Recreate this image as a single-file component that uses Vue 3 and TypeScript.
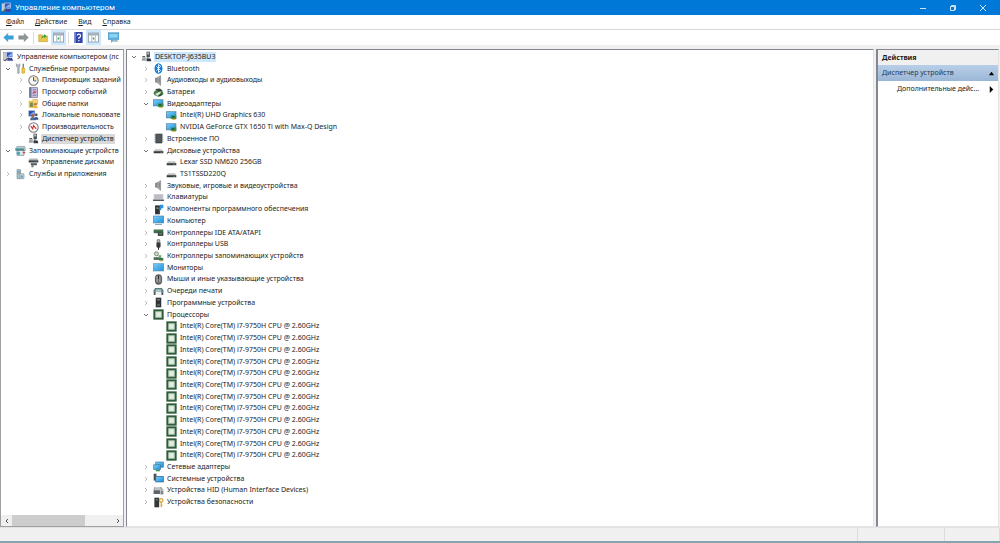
<script setup lang="ts">
import { ref } from 'vue'

interface TreeNode {
  label: string
  icon: string
  level: number
  state?: 'open' | 'closed'
  selected?: boolean
}

const node = (level: number, icon: string, label: string, state?: 'open' | 'closed', selected = false): TreeNode => ({
  level,
  icon,
  label,
  state,
  selected,
})

const menus = [
  { key: 'Ф', rest: 'айл' },
  { key: 'Д', rest: 'ействие' },
  { key: 'В', rest: 'ид' },
  { key: 'С', rest: 'правка' },
]

const consoleTree = ref<TreeNode[]>([
  node(0, 'manage', 'Управление компьютером (лс'),
  node(1, 'tools', 'Служебные программы', 'open'),
  node(2, 'clock', 'Планировщик заданий', 'closed'),
  node(2, 'events', 'Просмотр событий', 'closed'),
  node(2, 'folders', 'Общие папки', 'closed'),
  node(2, 'users', 'Локальные пользовате', 'closed'),
  node(2, 'perf', 'Производительность', 'closed'),
  node(2, 'device', 'Диспетчер устройств', undefined, true),
  node(1, 'storage', 'Запоминающие устройств', 'open'),
  node(2, 'disks', 'Управление дисками'),
  node(1, 'services', 'Службы и приложения', 'closed'),
])

const cpus = Array.from({ length: 12 }, () => node(2, 'cpu', 'Intel(R) Core(TM) i7-9750H CPU @ 2.60GHz'))

const deviceTree = ref<TreeNode[]>([
  node(0, 'device', 'DESKTOP-J635BU3', 'open', true),
  node(1, 'bluetooth', 'Bluetooth', 'closed'),
  node(1, 'speaker', 'Аудиовходы и аудиовыходы', 'closed'),
  node(1, 'battery', 'Батареи', 'closed'),
  node(1, 'video', 'Видеоадаптеры', 'open'),
  node(2, 'video', 'Intel(R) UHD Graphics 630'),
  node(2, 'video', 'NVIDIA GeForce GTX 1650 Ti with Max-Q Design'),
  node(1, 'firmware', 'Встроенное ПО', 'closed'),
  node(1, 'drive', 'Дисковые устройства', 'open'),
  node(2, 'drive', 'Lexar SSD NM620 256GB'),
  node(2, 'drive', 'TS1TSSD220Q'),
  node(1, 'speaker', 'Звуковые, игровые и видеоустройства', 'closed'),
  node(1, 'keyboard', 'Клавиатуры', 'closed'),
  node(1, 'component', 'Компоненты программного обеспечения', 'closed'),
  node(1, 'computer', 'Компьютер', 'closed'),
  node(1, 'ide', 'Контроллеры IDE ATA/ATAPI', 'closed'),
  node(1, 'usb', 'Контроллеры USB', 'closed'),
  node(1, 'raid', 'Контроллеры запоминающих устройств', 'closed'),
  node(1, 'monitor', 'Мониторы', 'closed'),
  node(1, 'mouse', 'Мыши и иные указывающие устройства', 'closed'),
  node(1, 'printer', 'Очереди печати', 'closed'),
  node(1, 'software', 'Программные устройства', 'closed'),
  node(1, 'cpu', 'Процессоры', 'open'),
  ...cpus,
  node(1, 'network', 'Сетевые адаптеры', 'closed'),
  node(1, 'system', 'Системные устройства', 'closed'),
  node(1, 'hid', 'Устройства HID (Human Interface Devices)', 'closed'),
  node(1, 'security', 'Устройства безопасности', 'closed'),
])

const select = (list: TreeNode[], item: TreeNode) => {
  list.forEach((n) => (n.selected = n === item))
}
</script>

<template>
  <svg class="defs" aria-hidden="true">
    <defs>
      <linearGradient id="screen" x1="0" y1="0" x2="1" y2="1">
        <stop offset="0" stop-color="#7fd0f8" />
        <stop offset="1" stop-color="#1b8fdc" />
      </linearGradient>
      <symbol id="manage" viewBox="0 0 16 16">
        <rect x="1" y="2" width="4" height="12" fill="#c4ccd2" stroke="#7c8790" stroke-width=".7" />
        <rect x="5" y="1.500" width="9" height="7.500" fill="#3557c4" stroke="#c8d3e0" />
        <path d="M6 8l7-5v5z" fill="#8db5f4" />
        <path d="M7 10h6l2 4H6z" fill="#38459a" />
        <path d="M1 14l7-5 1 1-6 5z" fill="#50555c" />
      </symbol>
      <symbol id="tools" viewBox="0 0 16 16">
        <path d="M4 15V7L2 5V1l2 2h1l2-2v4L6 7v8z" fill="#b3bac2" stroke="#6d7780" stroke-width=".7" />
        <path d="M11 1h2v7h-2z" fill="#777f86" />
        <rect x="10" y="7" width="4" height="8" rx="1" fill="#f1c937" stroke="#b58b18" stroke-width=".7" />
      </symbol>
      <symbol id="clock" viewBox="0 0 16 16">
        <circle cx="8" cy="8" r="6.800" fill="#f4f7fb" stroke="#7d7360" stroke-width="1.500" />
        <path d="M8 8h5A5 5 0 0 0 8 3z" fill="#f2d9a4" />
        <path d="M8 3v5.500h4" fill="none" stroke="#34475f" stroke-width="1.200" />
      </symbol>
      <symbol id="events" viewBox="0 0 16 16">
        <rect x="2" y="1" width="12" height="14" fill="#c9bfe0" stroke="#72698c" />
        <path d="M2 1h3v14H2z" fill="#6a7b9c" />
        <path d="M7 4h5M7 12h5" stroke="#5161a8" />
        <path d="M7 10l2-4 1 3 2-3" fill="none" stroke="#c4475a" stroke-width="1.400" />
      </symbol>
      <symbol id="folders" viewBox="0 0 16 16">
        <path d="M1 4h5l1 1h4v9H1z" fill="#eebc45" />
        <path d="M7 2h7v7H7z" fill="#f4d77b" stroke="#cf9d2c" stroke-width=".7" />
        <path d="M3 7h4v6H3z" fill="#6b8e5a" />
        <circle cx="11" cy="9" r="2" fill="#c87841" />
        <path d="M8 15q0-4 3-4t3 4z" fill="#f2b73a" />
      </symbol>
      <symbol id="users" viewBox="0 0 16 16">
        <rect x="1" y="1" width="9" height="8" fill="#294cb8" stroke="#acb9ca" />
        <path d="M2 7l7-5v5z" fill="#84aef2" />
        <circle cx="7" cy="8" r="2.200" fill="#a2623b" />
        <path d="M3 15q0-5 4-5t4 5z" fill="#536d92" />
        <circle cx="12" cy="7" r="2" fill="#654c3c" />
        <path d="M9 14q0-4 3-4t3 4z" fill="#31548a" />
      </symbol>
      <symbol id="perf" viewBox="0 0 16 16">
        <circle cx="8" cy="8" r="6.800" fill="#fff" stroke="#7c7272" stroke-width="1.500" />
        <path d="M4 6l3 4 1-5 4 5" fill="none" stroke="#d32e2e" stroke-width="1.600" />
      </symbol>
      <symbol id="device" viewBox="0 0 16 16">
        <path d="M8 1h5v8H8z" fill="#4b5056" />
        <path d="M9 2h3v3H9z" fill="#b8c0c8" />
        <path d="M2 9h5v5H1z" fill="#9aa2aa" />
        <path d="M2 8h4M10 9v3" stroke="#555b61" stroke-width="1.500" />
        <path d="M8 11h6l1 4H8z" fill="#34383d" />
      </symbol>
      <symbol id="storage" viewBox="0 0 16 16">
        <path d="M1 5l2-3h11l1 3v3H1z" fill="#bac7ce" stroke="#66777f" stroke-width=".7" />
        <rect x="1" y="5" width="12" height="3" fill="#3d9494" />
        <path d="M3 8h10v7H3z" fill="#e6edf0" stroke="#63767f" />
        <circle cx="5" cy="12" r="2.500" fill="#43a8bc" />
        <path d="M11 10h4v2h-4z" fill="#bf5353" />
      </symbol>
      <symbol id="disks" viewBox="0 0 16 16">
        <path d="M2 2h12l1 4H1z" fill="#aeb5ba" />
        <path d="M1 5h14v3H1z" fill="#3c4247" />
        <path d="M4 9h9v3H4z" fill="#555b60" />
        <path d="M5 12h3v3H5zM11 6h2v1h-2z" fill="#6a7176" />
      </symbol>
      <symbol id="services" viewBox="0 0 16 16">
        <path d="M3 1h5v13H3z" fill="#a9c6d2" stroke="#6c8793" />
        <path d="M4 4h3M4 6h3" stroke="#557382" />
        <path d="M7 7h6v7H7z" fill="#d4dde1" stroke="#7f929b" />
        <circle cx="10" cy="11" r="2" fill="#71a4bc" />
      </symbol>
      <symbol id="bluetooth" viewBox="0 0 16 16">
        <ellipse cx="8" cy="8" rx="5.800" ry="7.700" fill="#0c7ee0" />
        <path d="M5 5l6 6-3 3V2l3 3-6 6" fill="none" stroke="#fff" stroke-width="1.300" />
      </symbol>
      <symbol id="speaker" viewBox="0 0 16 16">
        <path d="M3 4h3v7H3z" fill="#8a8e92" />
        <path d="M6 4l5-3v14l-5-4z" fill="#b4b7ba" stroke="#606468" stroke-width=".8" />
        <path d="M9 4v7" stroke="#6b6f73" stroke-width="1.400" />
      </symbol>
      <symbol id="battery" viewBox="0 0 16 16">
        <ellipse cx="8" cy="9" rx="7" ry="5" fill="#4c7c4c" />
        <path d="M3 3l7-1 4 3-6 2z" fill="#34453a" />
        <path d="M3 10l8-4v3l-5 4z" fill="#d9e6d9" />
        <path d="M9 13l4-3" stroke="#233b27" stroke-width="1.500" />
      </symbol>
      <symbol id="video" viewBox="0 0 16 16">
        <rect x=".5" y="2.500" width="14" height="9" fill="url(#screen)" stroke="#527e98" />
        <path d="M7 8h8v5H7z" fill="#3b8b4b" />
        <path d="M9 9h3v2H9z" fill="#1e4e2c" />
        <path d="M9 13h5v1.500H9z" fill="#e0b93b" />
      </symbol>
      <symbol id="firmware" viewBox="0 0 16 16">
        <rect x="3.500" y="1" width="10" height="14" fill="#3f4245" />
        <path d="M2 3h13M2 6h13M2 9h13M2 12h13" stroke="#6c7074" />
        <path d="M6 3h5v10H6z" fill="#55595c" />
      </symbol>
      <symbol id="drive" viewBox="0 0 16 16">
        <path d="M3 6h10l2 3H1z" fill="#c2c5c8" />
        <path d="M1 9h14v3H1z" fill="#36393c" />
        <path d="M11 10h2v1h-2z" fill="#8fd18f" />
      </symbol>
      <symbol id="keyboard" viewBox="0 0 16 16">
        <path d="M1 3h14v8H1z" fill="#c9ccd0" />
        <path d="M2 5h12M2 7h12M2 9h12" stroke="#a2a6ad" stroke-width=".7" />
        <path d="M0 11h16v2H0z" fill="#4a4d55" />
      </symbol>
      <symbol id="component" viewBox="0 0 16 16">
        <path d="M3 2h7v13H3z" fill="#2f3438" />
        <path d="M5 5h3v2H5z" fill="#79b77c" />
        <path d="M10 1h5v5h-5zM9 6h3v3H9z" fill="#2f8ee0" />
      </symbol>
      <symbol id="computer" viewBox="0 0 16 16">
        <rect x=".5" y="1.500" width="15" height="10" fill="url(#screen)" stroke="#4f86a8" />
        <path d="M3 13h10v1.500H3z" fill="#8aa6b8" />
      </symbol>
      <symbol id="ide" viewBox="0 0 16 16">
        <path d="M1 4h14v5H1z" fill="#3c6b4a" />
        <path d="M1 3h14v1.500H1z" fill="#a3b3a7" />
        <path d="M7 8h8v5H7z" fill="#394744" />
        <path d="M9 10h4" stroke="#9cbfa5" />
      </symbol>
      <symbol id="usb" viewBox="0 0 16 16">
        <path d="M6 1h4v4H6z" fill="#b0b3b5" stroke="#505356" stroke-width=".8" />
        <path d="M5 5h6v6l-2 2H7l-2-2z" fill="#35383a" />
        <path d="M8 13v3" stroke="#35383a" stroke-width="1.500" />
      </symbol>
      <symbol id="raid" viewBox="0 0 16 16">
        <circle cx="5" cy="4" r="3" fill="#c9d6cb" stroke="#57705d" />
        <path d="M1 9h9v4H1z" fill="#4e6b56" />
        <path d="M8 6h4v4H8z" fill="#7aa083" />
        <path d="M9 10h6v4H9z" fill="#36774b" />
        <path d="M10 14h4v1h-4z" fill="#e0b93b" />
      </symbol>
      <symbol id="monitor" viewBox="0 0 16 16">
        <rect x=".5" y="2.500" width="15" height="10.500" fill="url(#screen)" stroke="#4f90bd" />
      </symbol>
      <symbol id="mouse" viewBox="0 0 16 16">
        <rect x="3.500" y="1" width="9" height="14" rx="4" fill="#6a6e72" stroke="#35383b" />
        <path d="M6 3v9M10 3v9" stroke="#d3d6d8" />
        <path d="M8 3v4" stroke="#232628" stroke-width="1.500" />
      </symbol>
      <symbol id="printer" viewBox="0 0 16 16">
        <path d="M3 3h10l3 5H0z" fill="#557b7c" />
        <path d="M4 5h8v2H4z" fill="#c8dada" />
        <path d="M1 8h3v5H1zM12 8h3v5h-3z" fill="#4b6063" />
        <path d="M4 9h8v4H4z" fill="#f1f4f4" />
      </symbol>
      <symbol id="software" viewBox="0 0 16 16">
        <path d="M4 1h8v14H4z" fill="#2f3336" />
        <path d="M6 3h4v2H6z" fill="#808589" />
        <path d="M6 10h4v3H6z" fill="#526a58" />
      </symbol>
      <symbol id="cpu" viewBox="0 0 16 16">
        <rect x="2" y="2" width="12" height="12" fill="#dfe9df" stroke="#2f5d3c" stroke-width="3" />
        <rect x="4" y="4" width="8" height="8" fill="#e4ebe4" stroke="#87ad8c" />
      </symbol>
      <symbol id="network" viewBox="0 0 16 16">
        <rect x="4" y="1.500" width="11" height="7.500" fill="url(#screen)" stroke="#3c789b" />
        <rect x="1" y="5.500" width="10" height="7" fill="url(#screen)" stroke="#3c789b" />
        <path d="M4 13h6v2H4z" fill="#3f9b58" />
      </symbol>
      <symbol id="system" viewBox="0 0 16 16">
        <path d="M1 1h4v10H1z" fill="#484d52" />
        <rect x="4" y="5" width="11" height="8" fill="url(#screen)" stroke="#2a6188" />
      </symbol>
      <symbol id="hid" viewBox="0 0 16 16">
        <path d="M2 3h10l3 4v6H1V6z" fill="#a0a5a8" />
        <path d="M1 8h9v5H1z" fill="#5b6265" />
        <path d="M3 4h7M3 6h9" stroke="#edf0f1" />
        <path d="M11 8h4v6h-4z" fill="#7b8185" stroke="#e9ebec" stroke-width=".7" />
      </symbol>
      <symbol id="security" viewBox="0 0 16 16">
        <path d="M2 1h7v14H2z" fill="#333739" />
        <path d="M4 3h3v2H4z" fill="#73787b" />
        <circle cx="12" cy="5" r="2.500" fill="none" stroke="#d9a534" stroke-width="1.800" />
        <path d="M12 7v8M12 12h2" stroke="#d9a534" stroke-width="1.800" />
      </symbol>
      <symbol id="arrow-left" viewBox="0 0 16 16">
        <path d="M1 8l6-6v3.500h8v5H7V14z" fill="#35a5e0" stroke="#4d88ab" stroke-width=".6" />
      </symbol>
      <symbol id="arrow-right" viewBox="0 0 16 16">
        <path d="M15 8L9 2v3.500H1v5h8V14z" fill="#8f9498" stroke="#73787c" stroke-width=".6" />
      </symbol>
      <symbol id="upfolder" viewBox="0 0 16 16">
        <path d="M1 4h5l1 2h7v8H1z" fill="#eac64f" stroke="#bd9d36" stroke-width=".8" />
        <path d="M5 10c0-4 2-5 4-5V3l4 3-4 3V7c-1 0-2 1-4 3z" fill="#3fa33f" />
      </symbol>
      <symbol id="panel" viewBox="0 0 16 16">
        <rect x=".5" y="1.500" width="15" height="13" fill="#fff" stroke="#7b8792" />
        <path d="M1 2h14v3H1z" fill="#9fabb6" />
        <path d="M5.500 5v9M10.500 5v9" stroke="#8d98a2" />
        <path d="M7 8h2v3H7z" fill="#3ba340" />
      </symbol>
      <symbol id="help" viewBox="0 0 16 16">
        <rect x="2" y="0" width="12" height="16" fill="#2f45ab" />
        <path d="M2 0h2v16H2z" fill="#8792d2" />
        <path d="M6 5q0-2 2.500-2T11 5.500 8.500 8.500V10M8.500 11.500v2" fill="none" stroke="#fff" stroke-width="1.700" />
      </symbol>
      <symbol id="display" viewBox="0 0 16 16">
        <path d="M0 1h16v10H9l-4 4v-4H0z" fill="#58b3e2" stroke="#4685a6" stroke-width=".8" />
        <path d="M2 3h12v5H2z" fill="#8fd3f2" />
        <path d="M8 12h6v2H8z" fill="#8aa1ad" />
      </symbol>
    </defs>
  </svg>

  <div class="window">
    <header class="titlebar">
      <svg class="icon"><use href="#manage" /></svg>
      <h1>Управление компьютером</h1>
      <button type="button" aria-label="Свернуть">
        <svg viewBox="0 0 8 8"><path d="M1 4.500h6" /></svg>
      </button>
      <button type="button" aria-label="Свернуть в окно">
        <svg viewBox="0 0 8 8"><path d="M1.500 2.500h4v4h-4zM2.500 2.500v-1h4v4h-1" /></svg>
      </button>
      <button type="button" aria-label="Закрыть">
        <svg viewBox="0 0 8 8"><path d="M1 1l6 6M7 1L1 7" /></svg>
      </button>
    </header>

    <nav class="menubar">
      <button v-for="m in menus" :key="m.key" type="button"><u>{{ m.key }}</u>{{ m.rest }}</button>
    </nav>

    <div class="toolbar" role="toolbar">
      <button type="button" aria-label="Назад"><svg><use href="#arrow-left" /></svg></button>
      <button type="button" aria-label="Вперед"><svg><use href="#arrow-right" /></svg></button>
      <i class="divider"></i>
      <button type="button" aria-label="Вверх"><svg><use href="#upfolder" /></svg></button>
      <button type="button" class="on" aria-label="Дерево консоли"><svg><use href="#panel" /></svg></button>
      <i class="divider"></i>
      <button type="button" aria-label="Справка"><svg><use href="#help" /></svg></button>
      <button type="button" class="on" aria-label="Панель действий"><svg><use href="#panel" /></svg></button>
      <i class="gap"></i>
      <button type="button" aria-label="Обновить"><svg><use href="#display" /></svg></button>
    </div>

    <main class="panes">
      <section class="pane console">
        <ul class="tree" role="tree">
          <li
            v-for="(n, i) in consoleTree"
            :key="i"
            role="treeitem"
            :class="['row', 'level' + n.level, { selected: n.selected }]"
            @click="select(consoleTree, n)"
          >
            <button v-if="n.state" type="button" :class="['toggle', n.state]" :aria-label="n.label">
              <svg viewBox="0 0 8 8"><path d="M3 2l2 2-2 2" /></svg>
            </button>
            <i v-else-if="n.level" class="toggle"></i>
            <svg class="icon"><use :href="'#' + n.icon" /></svg>
            <span class="label">{{ n.label }}</span>
          </li>
        </ul>
        <div class="scrollbar">
          <button type="button" aria-label="Влево"><svg viewBox="0 0 8 8"><path d="M5 2L3 4l2 2" /></svg></button>
          <div class="track"><div class="thumb"></div></div>
          <button type="button" aria-label="Вправо"><svg viewBox="0 0 8 8"><path d="M3 2l2 2-2 2" /></svg></button>
        </div>
      </section>

      <section class="pane devices">
        <ul class="tree" role="tree">
          <li
            v-for="(n, i) in deviceTree"
            :key="i"
            role="treeitem"
            :class="['row', 'level' + n.level, { selected: n.selected }]"
            @click="select(deviceTree, n)"
          >
            <button v-if="n.state" type="button" :class="['toggle', n.state]" :aria-label="n.label">
              <svg viewBox="0 0 8 8"><path d="M3 2l2 2-2 2" /></svg>
            </button>
            <i v-else class="toggle"></i>
            <svg class="icon"><use :href="'#' + n.icon" /></svg>
            <span class="label">{{ n.label }}</span>
          </li>
        </ul>
      </section>

      <aside class="pane actions">
        <h2>Действия</h2>
        <button type="button" class="group">
          <span>Диспетчер устройств</span>
          <svg viewBox="0 0 8 8"><path d="M1 6l3-4 3 4z" /></svg>
        </button>
        <button type="button" class="more">
          <span>Дополнительные дейс...</span>
          <svg viewBox="0 0 8 8"><path d="M2 0l4 4-4 4z" /></svg>
        </button>
      </aside>
    </main>

    <footer class="status"><span></span><span></span><span></span></footer>
  </div>
</template>

<style>
html,
body,
#app {
  height: 100%;
  margin: 0;
}
</style>

<style scoped>
.defs {
  position: absolute;
  width: 0;
  height: 0;
}
.window {
  box-sizing: border-box;
  height: 100vh;
  display: flex;
  flex-direction: column;
  overflow: hidden;
  background: #f0f0f0;
  border-bottom: 2px solid #84a5ae;
  font-family: 'Noto Sans', 'Open Sans', sans-serif;
  font-size: 7px;
  line-height: 10px;
  color: #1c1c1c;
}
button {
  display: flex;
  align-items: center;
  justify-content: center;
  padding: 0;
  border: 0;
  background: none;
  font: inherit;
  color: inherit;
}
svg {
  display: block;
  flex: none;
}
.icon {
  width: 11px;
  height: 11px;
}
.titlebar {
  height: 15px;
  display: flex;
  align-items: center;
  padding: 0 2px 0 1px;
  background: #0078d7;
  color: #fff;
}
.titlebar h1 {
  flex: 1;
  margin: 0 0 0 3px;
  font-family: Roboto, 'Noto Sans', sans-serif;
  font-size: 8px;
  font-weight: 400;
}
.titlebar button {
  width: 30px;
  height: 15px;
}
.titlebar button svg {
  width: 8px;
  height: 8px;
  fill: none;
  stroke: #fff;
  stroke-width: 0.8;
}
.menubar {
  height: 14px;
  display: flex;
  align-items: center;
  gap: 11px;
  padding-left: 6px;
  background: #fff;
  border-bottom: 1px solid #d8d8d8;
}
.toolbar {
  height: 15px;
  display: flex;
  align-items: center;
  padding-left: 1px;
  background: #fff;
}
.toolbar button {
  width: 15px;
  height: 15px;
}
.toolbar button svg {
  width: 11px;
  height: 11px;
}
.toolbar button.on {
  background: #cce8ff;
}
.divider {
  width: 1px;
  height: 12px;
  margin: 0 2px;
  background: #dcdcdc;
}
.gap {
  width: 5px;
}
.panes {
  flex: 1;
  min-height: 0;
  display: grid;
  grid-template-columns: 124px 1fr 123px;
  gap: 2px;
  padding: 4px 1px 0 0;
}
.pane {
  min-width: 0;
  display: flex;
  flex-direction: column;
  overflow: hidden;
  background: #fff;
  border: 1px solid #a0a0a0;
  border-top-color: #828790;
}
.devices {
  border-color: #828790 #e3e3e3 #e3e3e3 #828790;
}
.actions {
  border-color: #828790 #e3e3e3 #e3e3e3 #828790;
  border-left-width: 2px;
}
.tree {
  flex: 1;
  min-height: 0;
  display: grid;
  grid-template-rows: repeat(39, 1fr);
  margin: 0;
  padding: 1px 0 18px 2px;
  list-style: none;
}
.console .tree {
  padding-bottom: 7px;
}
.row {
  min-width: 0;
  min-height: 0;
  display: flex;
  align-items: center;
  gap: 2px;
  white-space: nowrap;
}
.level1 {
  padding-left: 12px;
}
.level2 {
  padding-left: 25px;
}
.console .level1 {
  padding-left: 0;
}
.console .level2 {
  padding-left: 13px;
}
.label {
  padding: 0 1px;
}
.devices .selected .label {
  background: #cce8ff;
}
.console .selected .label {
  background: #d9d9d9;
}
.toggle {
  flex: none;
  width: 10px;
  height: 10px;
}
.toggle svg,
.scrollbar svg {
  width: 8px;
  height: 8px;
  fill: none;
  stroke: #b4b4b4;
  stroke-width: 0.9;
}
.toggle.open svg {
  stroke: #606060;
  transform: rotate(90deg);
}
.scrollbar {
  height: 11px;
  display: flex;
  background: #f0f0f0;
}
.scrollbar button {
  width: 11px;
  height: 11px;
}
.scrollbar svg {
  stroke: #404040;
}
.track {
  flex: 1;
}
.thumb {
  width: 73%;
  height: 100%;
  background: #cdcdcd;
}
.actions h2 {
  margin: 0;
  padding: 2px 4px 1px;
  background: #f0f0f0;
  font-size: 7px;
  line-height: 12px;
  font-weight: 700;
}
.actions button {
  height: 16px;
  justify-content: space-between;
  padding: 0 3px 0 4px;
}
.actions svg {
  width: 7px;
  height: 7px;
  fill: #000;
}
.actions .group {
  background: linear-gradient(#b9cfe8, #9ab6d6);
  color: #1e395b;
}
.actions .more {
  padding-left: 19px;
}
.status {
  height: 13px;
  display: grid;
  grid-template-columns: 1fr 87px 55px;
  border-top: 1px solid #e3e3e3;
}
.status span {
  border-right: 1px solid #dcdcdc;
}
</style>
